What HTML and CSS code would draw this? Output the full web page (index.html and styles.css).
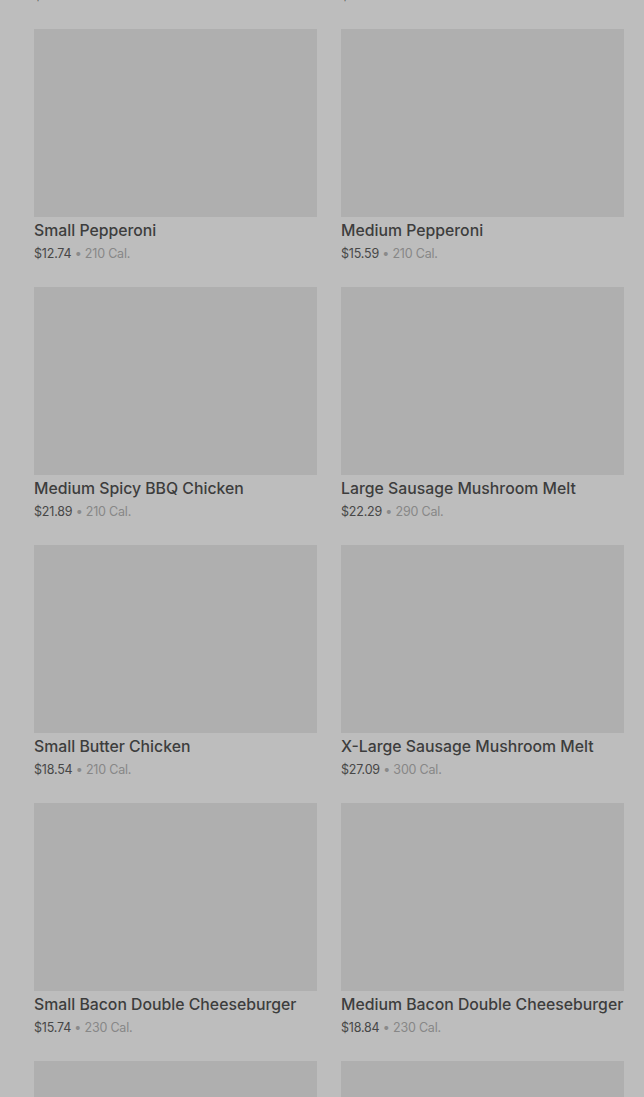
FILE: index.html
```html
<!DOCTYPE html>
<html lang="en">
<head>
  <meta charset="UTF-8" />
  <title>Menu</title>
  <link rel="stylesheet" href="styles.css">
</head>
<body>
  <div class="menu-grid">
    <div class="item">
      <div class="thumb"></div>
      <div class="name">Large Pepperoni</div>
      <div class="meta"><span class="price">$16.74</span> • <span class="cal">210 Cal.</span></div>
    </div>
    <div class="item">
      <div class="thumb"></div>
      <div class="name">X-Large Pepperoni</div>
      <div class="meta"><span class="price">$19.29</span> • <span class="cal">210 Cal.</span></div>
    </div>

    <div class="item">
      <div class="thumb"></div>
      <div class="name">Small Pepperoni</div>
      <div class="meta"><span class="price">$12.74</span> • <span class="cal">210 Cal.</span></div>
    </div>
    <div class="item">
      <div class="thumb"></div>
      <div class="name">Medium Pepperoni</div>
      <div class="meta"><span class="price">$15.59</span> • <span class="cal">210 Cal.</span></div>
    </div>

    <div class="item">
      <div class="thumb"></div>
      <div class="name">Medium Spicy BBQ Chicken</div>
      <div class="meta"><span class="price">$21.89</span> • <span class="cal">210 Cal.</span></div>
    </div>
    <div class="item">
      <div class="thumb"></div>
      <div class="name">Large Sausage Mushroom Melt</div>
      <div class="meta"><span class="price">$22.29</span> • <span class="cal">290 Cal.</span></div>
    </div>

    <div class="item">
      <div class="thumb"></div>
      <div class="name">Small Butter Chicken</div>
      <div class="meta"><span class="price">$18.54</span> • <span class="cal">210 Cal.</span></div>
    </div>
    <div class="item">
      <div class="thumb"></div>
      <div class="name">X-Large Sausage Mushroom Melt</div>
      <div class="meta"><span class="price">$27.09</span> • <span class="cal">300 Cal.</span></div>
    </div>

    <div class="item">
      <div class="thumb"></div>
      <div class="name">Small Bacon Double Cheeseburger</div>
      <div class="meta"><span class="price">$15.74</span> • <span class="cal">230 Cal.</span></div>
    </div>
    <div class="item">
      <div class="thumb"></div>
      <div class="name">Medium Bacon Double Cheeseburger</div>
      <div class="meta"><span class="price">$18.84</span> • <span class="cal">230 Cal.</span></div>
    </div>

    <div class="item">
      <div class="thumb"></div>
      <div class="name">Large Bacon Double Cheeseburger</div>
      <div class="meta"><span class="price">$21.94</span> • <span class="cal">230 Cal.</span></div>
    </div>
    <div class="item">
      <div class="thumb"></div>
      <div class="name">X-Large Bacon Double Cheeseburger</div>
      <div class="meta"><span class="price">$25.04</span> • <span class="cal">230 Cal.</span></div>
    </div>
  </div>
</body>
</html>
```

FILE: styles.css
```css
* {
  box-sizing: border-box;
}

html, body {
  margin: 0;
  padding: 0;
  height: 100%;
  overflow: hidden;
  background-color: #bdbdbd;
  font-family: Inter, 'Noto Sans', sans-serif;
}

/* list is scrolled: the row above is only partly visible */
.menu-grid {
  display: grid;
  grid-template-columns: 283px 283px;
  column-gap: 24px;
  row-gap: 23px;
  padding: 0 20px 0 34px;
  margin-top: -229px;
}

.item {
  display: flex;
  flex-direction: column;
}

.thumb {
  height: 188px;
  background-color: #afafaf;
}

.name {
  margin-top: 4px;
  font-size: 15.8px;
  line-height: 20px;
  font-weight: 500;
  color: #3d3d3d;
  white-space: nowrap;
}

.meta {
  margin-top: 3px;
  font-size: 12.5px;
  line-height: 20px;
  letter-spacing: -0.2px;
  color: #8a8a8a;
  white-space: nowrap;
}

.price {
  color: #474747;
}

.cal {
  color: #878787;
}
```
